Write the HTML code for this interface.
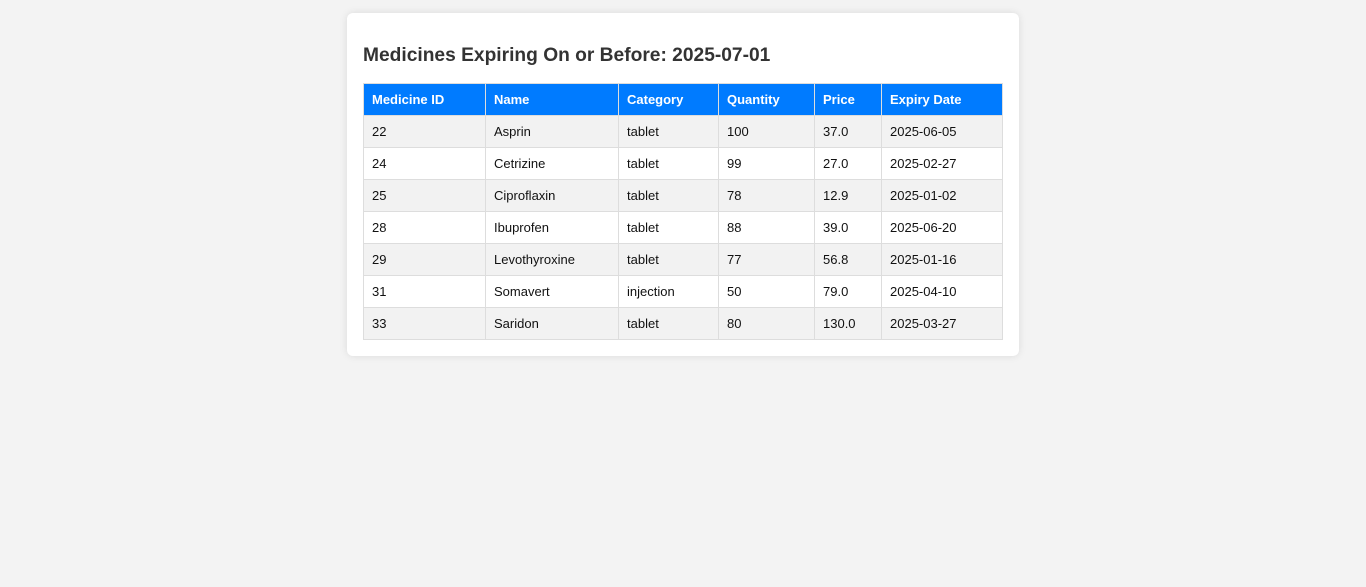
<!DOCTYPE html>
<html><head><meta charset="utf-8"><style>
html,body{margin:0;background:#f3f3f3;font-family:"Liberation Sans",Arial,sans-serif;}
.c{position:absolute;left:347px;top:13px;width:640px;padding:16px;background:#fff;border-radius:6px;box-shadow:0 0 8px rgba(0,0,0,0.1);height:311px;}
h2{margin:0;position:absolute;top:32px;left:16px;font-size:19.2px;color:#333;font-weight:bold;}
table{position:absolute;top:70px;left:16px;width:639px;border-collapse:collapse;font-size:13px;table-layout:fixed;}
th,td{border:1px solid #ddd;padding:0 8px;height:31px;text-align:left;color:#111;}
th{background:#007bff;color:#fff;font-weight:bold;border-color:#ddd;}
tr:nth-child(even) td{background:#f2f2f2;}
</style></head><body>
<div class="c">
<h2>Medicines Expiring On or Before: 2025-07-01</h2>
<table>
<colgroup><col style="width:122px"><col style="width:133px"><col style="width:100px"><col style="width:96px"><col style="width:67px"><col style="width:121px"></colgroup>
<tr><th>Medicine ID</th><th>Name</th><th>Category</th><th>Quantity</th><th>Price</th><th>Expiry Date</th></tr>
<tr><td>22</td><td>Asprin</td><td>tablet</td><td>100</td><td>37.0</td><td>2025-06-05</td></tr>
<tr><td>24</td><td>Cetrizine</td><td>tablet</td><td>99</td><td>27.0</td><td>2025-02-27</td></tr>
<tr><td>25</td><td>Ciproflaxin</td><td>tablet</td><td>78</td><td>12.9</td><td>2025-01-02</td></tr>
<tr><td>28</td><td>Ibuprofen</td><td>tablet</td><td>88</td><td>39.0</td><td>2025-06-20</td></tr>
<tr><td>29</td><td>Levothyroxine</td><td>tablet</td><td>77</td><td>56.8</td><td>2025-01-16</td></tr>
<tr><td>31</td><td>Somavert</td><td>injection</td><td>50</td><td>79.0</td><td>2025-04-10</td></tr>
<tr><td>33</td><td>Saridon</td><td>tablet</td><td>80</td><td>130.0</td><td>2025-03-27</td></tr>
</table>
</div>
</body></html>
